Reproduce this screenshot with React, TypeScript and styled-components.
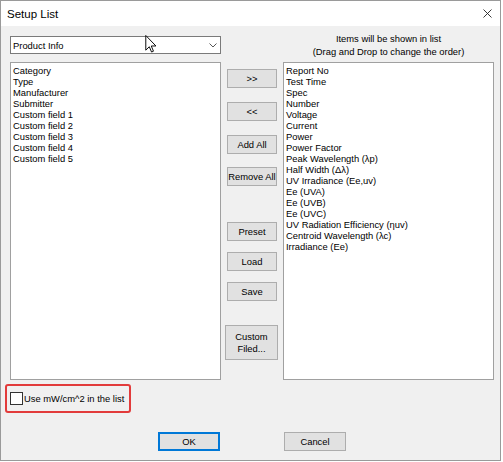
import React, { useState } from 'react';
import styled, { createGlobalStyle } from 'styled-components';

const GlobalStyle = createGlobalStyle`
  html, body {
    margin: 0;
    padding: 0;
    background: #ffffff;
  }
  body {
    font-family: 'Liberation Sans', Arial, sans-serif;
  }
`;

const Window = styled.div`
  position: relative;
  box-sizing: border-box;
  width: 501px;
  height: 461px;
  border: 1px solid #9a9a9a;
  background: #f0f0f0;
  display: flex;
  flex-direction: column;
`;

const TitleBar = styled.div`
  height: 25px;
  background: #ffffff;
  display: flex;
  align-items: center;
  justify-content: space-between;
  padding: 0 8px 0 6px;
  font-size: 11.5px;
  color: #000;
`;

const CloseIcon = styled.svg`
  width: 9px;
  height: 9px;
`;

const Body = styled.div`
  padding: 4px 0 0 9px;
  display: flex;
  flex-direction: column;
  font-size: 9.4px;
  color: #000;
`;

const Grid = styled.div`
  display: grid;
  grid-template-columns: 211px 50px 211px;
  grid-template-rows: 32px 318px;
  column-gap: 6px;
`;

const Combo = styled.div`
  box-sizing: border-box;
  margin-top: 6px;
  height: 18px;
  background: #fff;
  border: 1px solid #7a7a7a;
  display: flex;
  align-items: center;
  justify-content: space-between;
  padding: 0 3px 0 2px;
`;

const Hint = styled.div`
  padding-top: 2px;
  text-align: center;
  line-height: 13px;
`;

const ListBox = styled.div`
  box-sizing: border-box;
  background: #fff;
  border: 1px solid #a0a0a0;
  padding: 2px 2px;
  line-height: 11px;
  overflow: hidden;
`;

const ListItem = styled.div`
  white-space: nowrap;
  cursor: default;
`;

const ButtonColumn = styled.div`
  display: flex;
  flex-direction: column;
  align-items: flex-start;
`;

const SideButton = styled.button<{ $top: number; $tall?: boolean }>`
  box-sizing: border-box;
  margin-top: ${(p) => p.$top}px;
  width: ${(p) => (p.$tall ? '53px' : '50px')};
  height: ${(p) => (p.$tall ? '35px' : '19px')};
  margin-left: ${(p) => (p.$tall ? '-2px' : '0')};
  padding: 0;
  background: #e1e1e1;
  border: 1px solid #adadad;
  font-family: inherit;
  font-size: 9.4px;
  font-weight: 400;
  line-height: 12px;
  white-space: nowrap;
  color: #000;
`;

const OptionBox = styled.label`
  box-sizing: border-box;
  margin: 4px 0 0 -5px;
  width: 126px;
  height: 29px;
  border: 2px solid #e23b3b;
  border-radius: 3px;
  display: flex;
  align-items: center;
  gap: 1px;
  padding-left: 3px;
`;

const CheckBox = styled.span`
  box-sizing: border-box;
  width: 13px;
  height: 13px;
  background: #fff;
  border: 1px solid #333;
`;

const Footer = styled.div`
  margin-top: 19px;
  display: flex;
  padding-left: 148px;
  gap: 64px;
`;

const DialogButton = styled.button<{ $default?: boolean }>`
  box-sizing: border-box;
  width: 62px;
  height: 19px;
  padding: 0;
  background: #e1e1e1;
  border: 1px solid ${(p) => (p.$default ? '#0078d7' : '#adadad')};
  box-shadow: ${(p) => (p.$default ? 'inset 0 0 0 1px #0078d7' : 'none')};
  font-family: inherit;
  font-size: 9.4px;
  font-weight: 400;
  color: #000;
`;

const Pointer = styled.svg`
  position: absolute;
  left: 144px;
  top: 34px;
  width: 12px;
  height: 18px;
`;

const available = [
  'Category',
  'Type',
  'Manufacturer',
  'Submitter',
  'Custom field 1',
  'Custom field 2',
  'Custom field 3',
  'Custom field 4',
  'Custom field 5',
];

const shown = [
  'Report No',
  'Test Time',
  'Spec',
  'Number',
  'Voltage',
  'Current',
  'Power',
  'Power Factor',
  'Peak Wavelength (λp)',
  'Half Width (Δλ)',
  'UV Irradiance (Ee,uv)',
  'Ee (UVA)',
  'Ee (UVB)',
  'Ee (UVC)',
  'UV Radiation Efficiency (ηuv)',
  'Centroid Wavelength (λc)',
  'Irradiance (Ee)',
];

export default function App() {
  const [useMw, setUseMw] = useState(false);

  return (
    <>
      <GlobalStyle />
      <Window>
        <TitleBar>
          <span>Setup List</span>
          <CloseIcon viewBox="0 0 9 9">
            <path d="M0.5 0.5 L8.5 8.5 M8.5 0.5 L0.5 8.5" stroke="#222" strokeWidth="0.9" fill="none" />
          </CloseIcon>
        </TitleBar>
        <Body>
          <Grid>
            <Combo>
              <span>Product Info</span>
              <svg width="8" height="5" viewBox="0 0 8 5">
                <path d="M0.5 0.5 L4 4 L7.5 0.5" stroke="#444" strokeWidth="0.9" fill="none" />
              </svg>
            </Combo>
            <div />
            <Hint>
              Items will be shown in list
              <br />
              (Drag and Drop to change the order)
            </Hint>
            <ListBox>
              {available.map((f) => (
                <ListItem key={f}>{f}</ListItem>
              ))}
            </ListBox>
            <ButtonColumn>
              <SideButton $top={7}>&gt;&gt;</SideButton>
              <SideButton $top={14}>&lt;&lt;</SideButton>
              <SideButton $top={14}>Add All</SideButton>
              <SideButton $top={13}>Remove All</SideButton>
              <SideButton $top={36}>Preset</SideButton>
              <SideButton $top={11}>Load</SideButton>
              <SideButton $top={11}>Save</SideButton>
              <SideButton $top={24} $tall>
                Custom
                <br />
                Filed...
              </SideButton>
            </ButtonColumn>
            <ListBox>
              {shown.map((f) => (
                <ListItem key={f}>{f}</ListItem>
              ))}
            </ListBox>
          </Grid>
          <OptionBox onClick={() => setUseMw(!useMw)}>
            <CheckBox />
            <span>Use mW/cm^2 in the list</span>
          </OptionBox>
          <Footer>
            <DialogButton $default>OK</DialogButton>
            <DialogButton>Cancel</DialogButton>
          </Footer>
        </Body>
        <Pointer viewBox="0 0 12 19">
          <path
            d="M0.5 0.5 L0.5 16 L4.2 12.4 L6.6 18 L8.6 17.1 L6.3 11.6 L11.2 11.6 Z"
            fill="#fff"
            stroke="#000"
            strokeWidth="1"
            strokeLinejoin="round"
          />
        </Pointer>
      </Window>
    </>
  );
}
